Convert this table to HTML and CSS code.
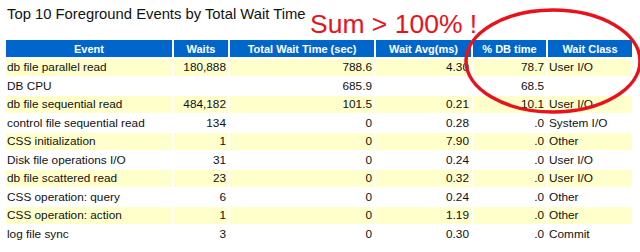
FILE: index.html
```html
<!DOCTYPE html>
<html>
<head>
<meta charset="utf-8">
<link rel="stylesheet" href="styles.css">
</head>
<body>
<div class="page">
  <h3 class="title">Top 10 Foreground Events by Total Wait Time</h3>
  <table class="awr">
    <colgroup>
      <col class="c-event"><col class="c-waits"><col class="c-total"><col class="c-avg"><col class="c-db"><col class="c-class">
    </colgroup>
    <thead>
      <tr><th>Event</th><th>Waits</th><th>Total Wait Time (sec)</th><th>Wait Avg(ms)</th><th>% DB time</th><th>Wait Class</th></tr>
    </thead>
    <tbody>
      <tr class="odd"><td>db file parallel read</td><td class="num">180,888</td><td class="num">788.6</td><td class="num">4.30</td><td class="num">78.7</td><td>User I/O</td></tr>
      <tr><td>DB CPU</td><td class="num"></td><td class="num">685.9</td><td class="num"></td><td class="num">68.5</td><td></td></tr>
      <tr class="odd"><td>db file sequential read</td><td class="num">484,182</td><td class="num">101.5</td><td class="num">0.21</td><td class="num">10.1</td><td>User I/O</td></tr>
      <tr><td>control file sequential read</td><td class="num">134</td><td class="num">0</td><td class="num">0.28</td><td class="num">.0</td><td>System I/O</td></tr>
      <tr class="odd"><td>CSS initialization</td><td class="num">1</td><td class="num">0</td><td class="num">7.90</td><td class="num">.0</td><td>Other</td></tr>
      <tr><td>Disk file operations I/O</td><td class="num">31</td><td class="num">0</td><td class="num">0.24</td><td class="num">.0</td><td>User I/O</td></tr>
      <tr class="odd"><td>db file scattered read</td><td class="num">23</td><td class="num">0</td><td class="num">0.32</td><td class="num">.0</td><td>User I/O</td></tr>
      <tr><td>CSS operation: query</td><td class="num">6</td><td class="num">0</td><td class="num">0.24</td><td class="num">.0</td><td>Other</td></tr>
      <tr class="odd"><td>CSS operation: action</td><td class="num">1</td><td class="num">0</td><td class="num">1.19</td><td class="num">.0</td><td>Other</td></tr>
      <tr><td>log file sync</td><td class="num">3</td><td class="num">0</td><td class="num">0.30</td><td class="num">.0</td><td>Commit</td></tr>
    </tbody>
  </table>
  <div class="note">Sum &gt; 100% !</div>
  <svg class="circle" width="200" height="120" viewBox="0 0 200 120">
    <ellipse cx="89" cy="53" rx="87" ry="51" fill="none" stroke="#e8121c" stroke-width="3.5"/>
  </svg>
</div>
</body>
</html>
```

FILE: styles.css
```css
html, body {
  margin: 0;
  padding: 0;
  background: #fff;
}
.page {
  position: relative;
  width: 640px;
  height: 252px;
  overflow: hidden;
  font-family: "Liberation Sans", Arial, sans-serif;
}
.title {
  margin: 0;
  padding: 5px 0 0 7px;
  height: 38px;
  box-sizing: border-box;
  font-size: 14.8px;
  font-weight: normal;
  line-height: 18px;
  color: #111;
}
.awr {
  margin-left: 4px;
  border-collapse: separate;
  border-spacing: 2px;
  table-layout: fixed;
  width: 630px;
  font-size: 11.8px;
  color: #111;
}
.c-event { width: 166px; }
.c-waits { width: 54px; }
.c-total { width: 144px; }
.c-avg { width: 95px; }
.c-db { width: 73px; }
.c-class { width: 84px; }
.awr th {
  background: #0066cc;
  color: #fff;
  font-size: 11px;
  font-weight: bold;
  height: 17px;
  padding: 0;
  text-align: center;
  white-space: nowrap;
  overflow: hidden;
}
.awr td {
  height: 16.5px;
  padding: 0 1px 0 1px;
  white-space: nowrap;
  overflow: hidden;
  line-height: 14px;
}
.awr td.num {
  text-align: right;
  padding-right: 2px;
}
.awr tr.odd td {
  background: #ffffcc;
}
.note {
  position: absolute;
  left: 310px;
  top: 9px;
  font-size: 26.5px;
  line-height: 30px;
  color: #e8121c;
  white-space: nowrap;
}
.circle {
  position: absolute;
  left: 464px;
  top: 8px;
}
```
